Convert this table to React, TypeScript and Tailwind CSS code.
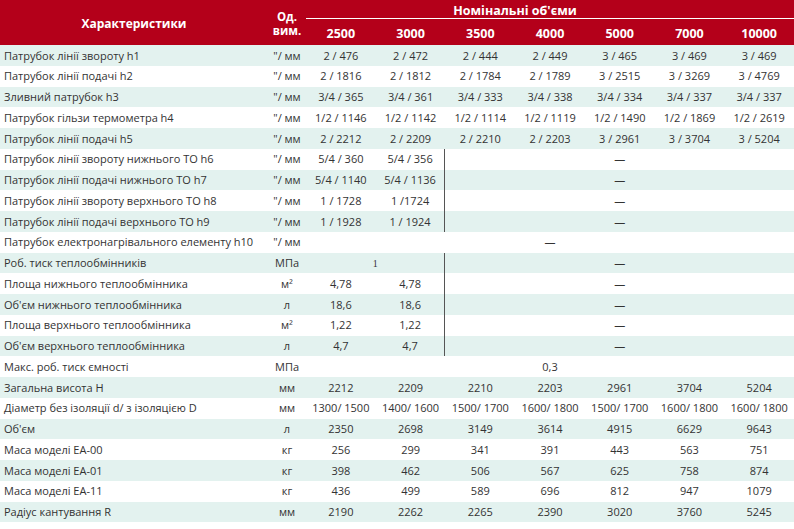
import React from "react";

type Cell = { v: string; span: number; line?: boolean; serif?: boolean };

const cols = ["2500", "3000", "3500", "4000", "5000", "7000", "10000"];

const all = (vals: string[]): Cell[] => vals.map((v) => ({ v, span: 1 }));
const dash = "—";

// rows where only 2500/3000 carry values, the rest is a dash
const pair = (a: string, b: string): Cell[] => [
  { v: a, span: 1 },
  { v: b, span: 1, line: true },
  { v: dash, span: 5 },
];

const rows: { label: string; unit: string; cells: Cell[] }[] = [
  { label: "Патрубок лінії звороту h1", unit: "\"/ мм", cells: all(["2 / 476", "2 / 472", "2 / 444", "2 / 449", "3 / 465", "3 / 469", "3 / 469"]) },
  { label: "Патрубок лінії подачі h2", unit: "\"/ мм", cells: all(["2 / 1816", "2 / 1812", "2 / 1784", "2 / 1789", "3 / 2515", "3 / 3269", "3 / 4769"]) },
  { label: "Зливний патрубок h3", unit: "\"/ мм", cells: all(["3/4 / 365", "3/4 / 361", "3/4 / 333", "3/4 / 338", "3/4 / 334", "3/4 / 337", "3/4 / 337"]) },
  { label: "Патрубок гільзи термометра h4", unit: "\"/ мм", cells: all(["1/2 / 1146", "1/2 / 1142", "1/2 / 1114", "1/2 / 1119", "1/2 / 1490", "1/2 / 1869", "1/2 / 2619"]) },
  { label: "Патрубок лінії подачі h5", unit: "\"/ мм", cells: all(["2 / 2212", "2 / 2209", "2 / 2210", "2 / 2203", "3 / 2961", "3 / 3704", "3 / 5204"]) },
  { label: "Патрубок лінії звороту нижнього ТО h6", unit: "\"/ мм", cells: pair("5/4 / 360", "5/4 / 356") },
  { label: "Патрубок лінії подачі нижнього ТО h7", unit: "\"/ мм", cells: pair("5/4 / 1140", "5/4 / 1136") },
  { label: "Патрубок лінії звороту верхнього ТО h8", unit: "\"/ мм", cells: pair("1 / 1728", "1 /1724") },
  { label: "Патрубок лінії подачі верхнього ТО h9", unit: "\"/ мм", cells: pair("1 / 1928", "1 / 1924") },
  { label: "Патрубок електронагрівального елементу h10", unit: "\"/ мм", cells: [{ v: dash, span: 7 }] },
  { label: "Роб. тиск теплообмінників", unit: "МПа", cells: [{ v: "1", span: 2, line: true, serif: true }, { v: dash, span: 5 }] },
  { label: "Площа нижнього теплообмінника", unit: "м²", cells: pair("4,78", "4,78") },
  { label: "Об'єм нижнього теплообмінника", unit: "л", cells: pair("18,6", "18,6") },
  { label: "Площа верхнього теплообмінника", unit: "м²", cells: pair("1,22", "1,22") },
  { label: "Об'єм верхнього теплообмінника", unit: "л", cells: pair("4,7", "4,7") },
  { label: "Макс. роб. тиск ємності", unit: "МПа", cells: [{ v: "0,3", span: 7 }] },
  { label: "Загальна висота H", unit: "мм", cells: all(["2212", "2209", "2210", "2203", "2961", "3704", "5204"]) },
  { label: "Діаметр без ізоляції d/ з ізоляцією D", unit: "мм", cells: all(["1300/ 1500", "1400/ 1600", "1500/ 1700", "1600/ 1800", "1500/ 1700", "1600/ 1800", "1600/ 1800"]) },
  { label: "Об'єм", unit: "л", cells: all(["2350", "2698", "3149", "3614", "4915", "6629", "9643"]) },
  { label: "Маса моделі ЕА-00", unit: "кг", cells: all(["256", "299", "341", "391", "443", "563", "751"]) },
  { label: "Маса моделі ЕА-01", unit: "кг", cells: all(["398", "462", "506", "567", "625", "758", "874"]) },
  { label: "Маса моделі ЕА-11", unit: "кг", cells: all(["436", "499", "589", "696", "812", "947", "1079"]) },
  { label: "Радіус кантування R", unit: "мм", cells: all(["2190", "2262", "2265", "2390", "3020", "3760", "5245"]) },
];

const spanClass: Record<number, string> = {
  1: "col-span-1",
  2: "col-span-2",
  5: "col-span-5",
  7: "col-span-7",
};

export default function App() {
  return (
    <div className="h-[529px] w-[794px] overflow-hidden bg-white font-['Open_Sans',sans-serif] text-[11px] text-[#333]">
      <div className="grid h-[45px] grid-cols-[268px_38px_repeat(7,1fr)] grid-rows-[19px_26px] bg-[#b4001a] font-bold text-white">
        <div className="row-span-2 flex items-center justify-center pt-[3px] text-[12px]">Характеристики</div>
        <div className="row-span-2 flex flex-col items-center justify-center pt-[2px] text-[11.5px] leading-[14px]">
          <span>Од.</span>
          <span>вим.</span>
        </div>
        <div className="col-span-7 flex items-end justify-center border-b border-white pb-[1px] pr-[70px] text-[12.5px] leading-none">
          Номінальні об'єми
        </div>
        {cols.map((c) => (
          <div key={c} className="flex items-center justify-center pt-[4px] text-[12.5px]">
            {c}
          </div>
        ))}
      </div>

      {rows.map((r, i) => (
        <div
          key={r.label}
          className={`grid h-[20.75px] grid-cols-[268px_38px_repeat(7,1fr)] items-stretch ${i % 2 === 0 ? "bg-[#e3f2ef]" : "bg-white"}`}
        >
          <div className="flex items-center pl-[4px] pt-[1px] whitespace-nowrap">{r.label}</div>
          <div className="flex items-center justify-center pt-[1px] whitespace-nowrap">{r.unit}</div>
          {r.cells.map((c, j) => (
            <div
              key={j}
              className={`flex items-center justify-center pt-[1px] whitespace-nowrap ${spanClass[c.span]} ${c.line ? "border-r border-[#555]" : ""} ${c.serif ? "font-['Liberation_Serif',serif] text-[10px]" : ""}`}
            >
              {c.v}
            </div>
          ))}
        </div>
      ))}
    </div>
  );
}
